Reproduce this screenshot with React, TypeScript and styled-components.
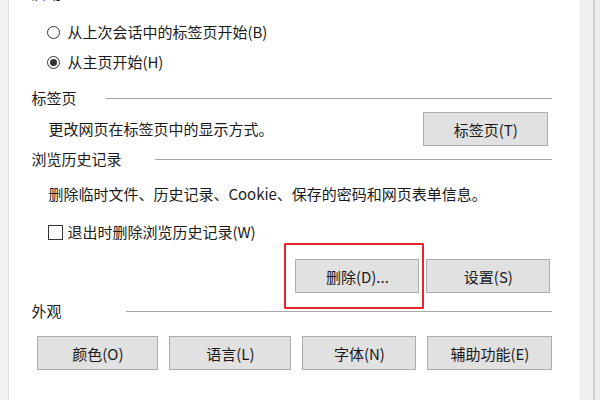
import React from 'react';
import styled, { createGlobalStyle } from 'styled-components';

const GlobalStyle = createGlobalStyle`
  html, body {
    margin: 0;
    padding: 0;
    background: #ffffff;
    overflow: hidden;
  }
  body {
    font-family: "Noto Sans CJK SC", "Noto Sans", sans-serif;
    color: #1a1a1a;
  }
`;

const Window = styled.div`
  display: flex;
  width: 600px;
  height: 400px;
  overflow: hidden;
`;

const LeftFrame = styled.div`
  width: 9px;
  background: #f2f2f2;
  border-right: 1px solid #dcdcdc;
`;

const RightFrame = styled.div`
  display: flex;
  width: 20px;
  border-left: 1px solid #e4e4e4;
  background: #f0f0f0;
  > div {
    margin-left: 12px;
    width: 2px;
    background: #cfcfcf;
  }
  > span {
    flex: 1;
    background: #ececec;
  }
`;

const Panel = styled.div`
  flex: 1;
  display: flex;
  flex-direction: column;
  background: #ffffff;
  padding: 0 28px 0 22px;
  font-size: 15px;
  line-height: 20px;
`;

const Heading = styled.div<{ $labelWidth: number; $top: number }>`
  display: flex;
  align-items: center;
  height: 20px;
  margin-top: ${p => p.$top}px;
  > span {
    width: ${p => p.$labelWidth}px;
    flex-shrink: 0;
    white-space: nowrap;
  }
  > i {
    flex: 1;
    height: 1px;
    background: #a6a6a6;
  }
`;

const Option = styled.label<{ $top: number }>`
  display: flex;
  align-items: center;
  height: 20px;
  margin-top: ${p => p.$top}px;
  padding-left: 16px;
  white-space: nowrap;
`;

const RadioMark = styled.span<{ $checked?: boolean }>`
  position: relative;
  width: 11px;
  height: 11px;
  border: 1px solid #333;
  border-radius: 50%;
  margin-right: 7px;
  &::after {
    content: '';
    display: ${p => (p.$checked ? 'block' : 'none')};
    position: absolute;
    left: 2px;
    top: 2px;
    width: 7px;
    height: 7px;
    border-radius: 50%;
    background: #333;
  }
`;

const CheckMark = styled.span`
  width: 13px;
  height: 13px;
  border: 1px solid #333;
  margin-right: 4px;
  margin-left: 1px;
`;

const Desc = styled.div<{ $top: number }>`
  height: 20px;
  margin-top: ${p => p.$top}px;
  padding-left: 17px;
  white-space: nowrap;
`;

const Row = styled.div<{ $top: number }>`
  display: flex;
  align-items: center;
  margin-top: ${p => p.$top}px;
`;

const Spacer = styled.div`
  flex: 1;
`;

const Button = styled.button<{ $w: number }>`
  position: relative;
  width: ${p => p.$w}px;
  height: 34px;
  flex-shrink: 0;
  background: #e1e1e1;
  border: 1px solid #adadad;
  font-family: inherit;
  font-size: 15px;
  color: #1a1a1a;
  padding: 0;
`;

const Highlight = styled.span`
  position: absolute;
  left: -12px;
  right: -6px;
  top: -17px;
  bottom: -17px;
  border: 2px solid #e5262e;
  border-radius: 1px;
  pointer-events: none;
`;

const ButtonGrid = styled.div`
  display: grid;
  grid-template-columns: 121px 122px 114px 125px;
  column-gap: 11px;
  margin-top: 15px;
  margin-left: 6px;
`;

export default function App() {
  return (
    <Window>
      <GlobalStyle />
      <LeftFrame />
      <Panel>
        <Heading $labelWidth={74} $top={-17}>
          <span>启动</span>
        </Heading>
        <Option $top={19}>
          <RadioMark />
          从上次会话中的标签页开始(B)
        </Option>
        <Option $top={10}>
          <RadioMark $checked />
          从主页开始(H)
        </Option>

        <Heading $labelWidth={75} $top={16}>
          <span>标签页</span>
          <i />
        </Heading>
        <Row $top={4}>
          <Desc $top={0}>更改网页在标签页中的显示方式。</Desc>
          <Spacer />
          <Button $w={125} style={{ marginRight: 4 }}>标签页(T)</Button>
        </Row>

        <Heading $labelWidth={124} $top={3}>
          <span>浏览历史记录</span>
          <i />
        </Heading>
        <Desc $top={15}>删除临时文件、历史记录、Cookie、保存的密码和网页表单信息。</Desc>
        <Option $top={18}>
          <CheckMark />
          退出时删除浏览历史记录(W)
        </Option>
        <Row $top={17}>
          <Spacer />
          <Button $w={124}>
            删除(D)...
            <Highlight />
          </Button>
          <Button $w={124} style={{ marginLeft: 7, marginRight: 2 }}>设置(S)</Button>
        </Row>

        <Heading $labelWidth={95} $top={8}>
          <span>外观</span>
          <i />
        </Heading>
        <ButtonGrid>
          <Button $w={121}>颜色(O)</Button>
          <Button $w={122}>语言(L)</Button>
          <Button $w={114}>字体(N)</Button>
          <Button $w={125}>辅助功能(E)</Button>
        </ButtonGrid>
      </Panel>
      <RightFrame>
        <div />
        <span />
      </RightFrame>
    </Window>
  );
}
